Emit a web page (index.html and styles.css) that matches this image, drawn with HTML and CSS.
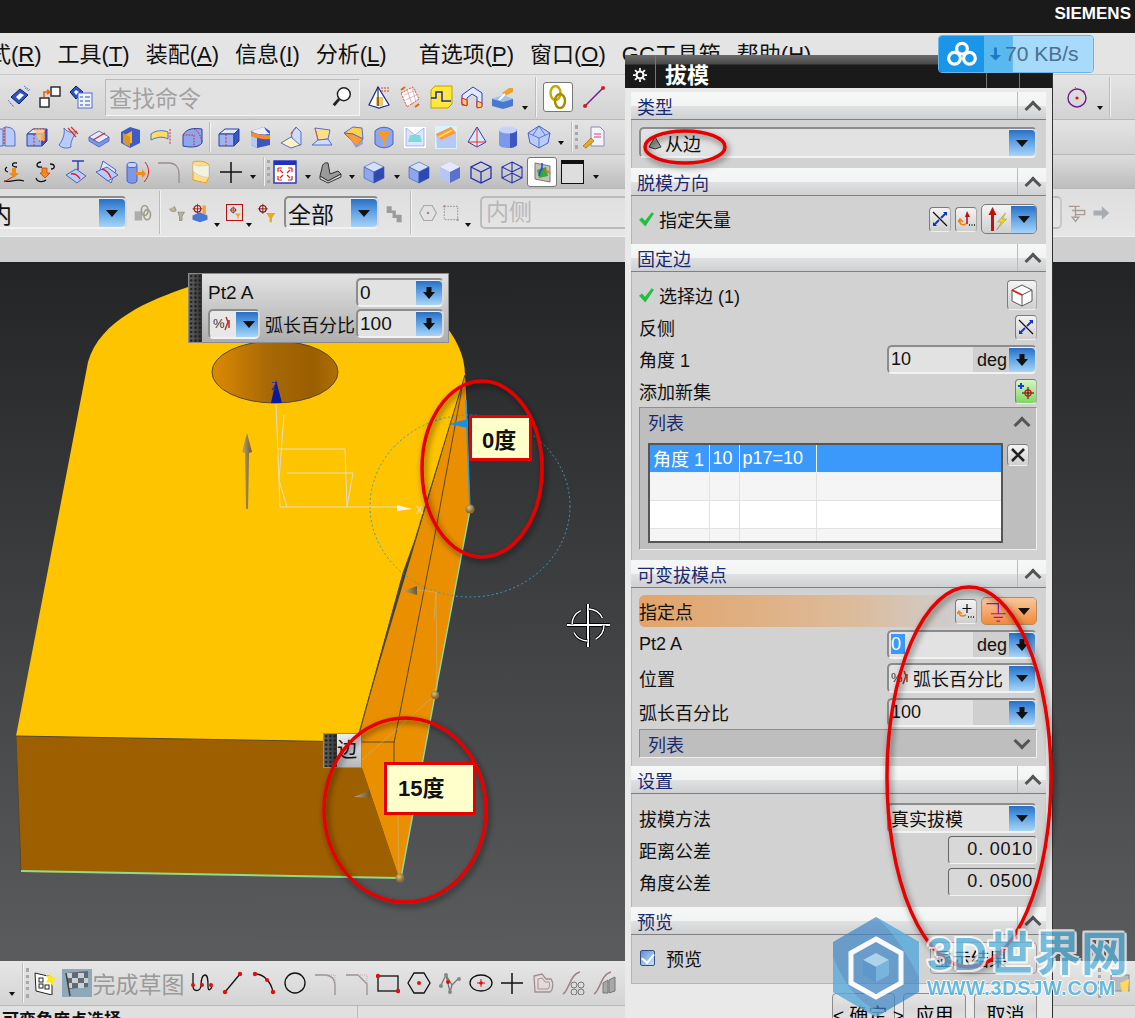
FILE: index.html
```html
<!DOCTYPE html>
<html lang="zh-CN">
<head>
  <meta charset="UTF-8">
  <title>NX 拔模</title>
  <link rel="stylesheet" href="styles.css">
</head>
<body>
  <!-- shared toolbar icons -->
  <svg class="defs" aria-hidden="true">
    <symbol id="cube" viewBox="0 0 24 24"><path d="M12 2 22 7 12 12 2 7Z" fill="#d5e0ff" stroke="#3a55b0" stroke-width=".6"/><path d="M2 7 12 12V23L2 18Z" fill="#8ea6ee" stroke="#3a55b0" stroke-width=".6"/><path d="M22 7 12 12V23L22 18Z" fill="#2c49b2" stroke="#3a55b0" stroke-width=".6"/></symbol>
    <symbol id="cube-soft" viewBox="0 0 24 24"><path d="M12 2 22 7 12 12 2 7Z" fill="#e3e9ff"/><path d="M2 7 12 12V23L2 18Z" fill="#b6c6f4"/><path d="M22 7 12 12V23L22 18Z" fill="#5a72cc"/></symbol>
    <symbol id="wire" viewBox="0 0 24 24"><path d="M12 2 22 7V18L12 23 2 18V7ZM2 7 12 12 22 7M12 12V23" fill="none" stroke="#2330b0" stroke-width="1.3"/></symbol>
    <symbol id="wire2" viewBox="0 0 24 24"><path d="M12 2 22 7V18L12 23 2 18V7ZM2 7 12 12 22 7M12 12V23M2 18 12 13 22 18M12 2V13" fill="none" stroke="#2330b0" stroke-width="1.1"/></symbol>
    <symbol id="box-cut" viewBox="0 0 24 24"><path d="M2 9 8 4H22L17 9Z" fill="#dfe7ff" stroke="#2840a8"/><path d="M2 9H17V21H2Z" fill="#9db2f0" stroke="#2840a8"/><path d="M17 9 22 4V16L17 21Z" fill="#3c58c0" stroke="#2840a8"/><path d="M9 9V21" stroke="#e02020" stroke-dasharray="2 1.4"/></symbol>
    <symbol id="box-red" viewBox="0 0 24 24"><use href="#box-cut"/><path d="M9 4H20V16H14" fill="#ffc86a" fill-opacity=".8" stroke="#e02020" stroke-dasharray="1.6 1.2"/></symbol>
    <symbol id="sheet" viewBox="0 0 24 24"><path d="M8 3C12 8 16 8 21 6 17 12 14 18 15 22 10 24 6 23 3 20 7 15 9 9 8 3Z" fill="#b9cbf8" stroke="#5570c8"/><path d="M12 3 20 12M15 2 22 9" stroke="#e03020" stroke-width="1.2"/></symbol>
    <symbol id="slab" viewBox="0 0 24 24"><path d="M2 12 12 6 22 12 12 18Z" fill="#e6ecff" stroke="#5a72cc"/><path d="M2 12V16L12 22 22 16V12L12 18Z" fill="#7e95e4" stroke="#5a72cc"/><path d="M6 15 18 8" stroke="#e02020" stroke-width="1.3"/></symbol>
    <symbol id="box-orange" viewBox="0 0 24 24"><path d="M3 7 12 2 22 5V18L12 23 3 18Z" fill="#3f5cc4"/><path d="M7 10 14 6V18L7 20Z" fill="#ffb020"/><path d="M5 8V18L12 22V12Z" fill="#d9962a"/></symbol>
    <symbol id="band" viewBox="0 0 24 24"><path d="M2 9C7 5 14 5 19 7V14C14 11 8 12 2 15Z" fill="#ffdd66" stroke="#5570c8"/><path d="M21 4V20" stroke="#e02020" stroke-dasharray="2 1.2"/></symbol>
    <symbol id="round-box" viewBox="0 0 24 24"><path d="M3 10C7 3 14 3 22 4V18C19 22 12 23 3 21Z" fill="#8ea6ee" stroke="#2840a8"/><path d="M14 4C18 6 21 10 22 18" fill="none" stroke="#e02020" stroke-dasharray="1.6 1.2"/><path d="M3 10H14V21" fill="none" stroke="#e02020" stroke-dasharray="1.6 1.2"/></symbol>
    <symbol id="edge-blend" viewBox="0 0 24 24"><path d="M3 6 16 2 22 6V20L9 23 3 20Z" fill="#3c58c0"/><path d="M3 6 16 2C18 6 20 8 22 9 14 10 7 9 3 6Z" fill="#e8eefc"/><path d="M3 7C9 9 16 11 22 10V14C15 15 8 13 3 11Z" fill="#ff8a20"/><path d="M3 11V20L9 23V13Z" fill="#b8c8f6"/></symbol>
    <symbol id="fold" viewBox="0 0 24 24"><path d="M17 2 22 7V20L14 18 12 8Z" fill="#cfdcff" stroke="#5570c8"/><path d="M2 18 12 12 21 20 12 23Z" fill="#fff2c0" stroke="#5570c8"/><path d="M12 13C13 8 14 5 17 3" stroke="#e06020" fill="none"/></symbol>
    <symbol id="fold2" viewBox="0 0 24 24"><path d="M5 3 20 5 18 14 8 15Z" fill="#ffe088" stroke="#5570c8"/><path d="M2 20 8 15 18 14 22 20Z" fill="#cfdcff" stroke="#5570c8"/><path d="M8 15 5 3" stroke="#e06020"/></symbol>
    <symbol id="fan" viewBox="0 0 24 24"><path d="M3 8 12 2 21 3 22 14 12 9Z" fill="#ffd050" stroke="#5570c8"/><path d="M3 8 12 9 22 14 16 21C11 16 7 12 3 8Z" fill="#ff9a30" stroke="#5570c8"/><path d="M7 11 16 21 22 14 22 19 15 23Z" fill="#8ea6ee"/></symbol>
    <symbol id="funnel" viewBox="0 0 24 24"><path d="M3 6C8 1 16 1 21 6V19C16 24 8 24 3 19Z" fill="#8ea6ee" stroke="#4a63c0"/><path d="M5 6H19L13 15V20H11V15Z" fill="#ff9a18"/></symbol>
    <symbol id="neck" viewBox="0 0 24 24"><path d="M1 2H23V23H1Z" fill="#fff"/><path d="M3 3 12 10 21 3V21H3Z" fill="#dce6ff" stroke="#7a90dc" stroke-width=".6"/><path d="M7 10H17L19 17H5Z" fill="#7adcd4"/></symbol>
    <symbol id="wedge" viewBox="0 0 24 24"><path d="M1 1H23V24H1Z" fill="#d9f0ff"/><path d="M2 9 17 2 22 8V23H3Z" fill="#b8c8f6"/><path d="M2 9 17 2 22 8 7 15Z" fill="#ff9a30"/><path d="M5 12 18 5" stroke="#ffe070" stroke-width="1.6"/></symbol>
    <symbol id="pyramid" viewBox="0 0 24 24"><path d="M12 2 3 17 12 22 21 17Z" fill="#dfe7ff" stroke="#2840c0"/><path d="M12 2V22M3 17H21" stroke="#e03020"/></symbol>
    <symbol id="cyl" viewBox="0 0 24 24"><path d="M3 5V20C5 24 19 24 21 20V5Z" fill="#7d98ea"/><path d="M14 4H21V20C20 22 16 23 14 23Z" fill="#3c58c0"/><ellipse cx="12" cy="5" rx="9" ry="3.4" fill="#c5d4ff"/></symbol>
    <symbol id="gem" viewBox="0 0 24 24"><path d="M12 1 23 8 21 18 12 23 3 18 1 8Z" fill="#b9cbf8" stroke="#4a63c0"/><path d="M1 8 12 13 23 8M12 13V23M12 1 6 10M12 1 18 10" stroke="#4a63c0" fill="none" stroke-width=".8"/></symbol>
    <symbol id="wrench" viewBox="0 0 24 24"><path d="M10 2H19L23 6V21H10Z" fill="#f2f2ff" stroke="#8a8ab0"/><path d="M13 9H20M13 12H20" stroke="#e04060"/><path d="M2 21 10 13 13 16 5 23Z" fill="#e8a820" stroke="#906000" stroke-width=".6"/></symbol>
    <symbol id="curve-drop" viewBox="0 0 24 24"><path d="M15 3C9 2 9 7 15 7M5 7C2 9 3 11 6 12M2 21C8 23 14 18 22 21" fill="none" stroke="#111" stroke-width="1.3"/><path d="M2 22 14 15" stroke="#d82020"/><path d="M10 8H14V13H17L12 18 7 13H10Z" fill="#f08c18"/></symbol>
    <symbol id="curve-drop2" viewBox="0 0 24 24"><path d="M8 2C2 3 3 8 9 7M17 4C23 4 22 9 18 9M3 18C5 24 12 21 13 20" fill="none" stroke="#111" stroke-width="1.3"/><path d="M9 8H14V13H17L12 18 7 13H9Z" fill="#f08c18" stroke="#c02010" stroke-width=".6"/></symbol>
    <symbol id="plate" viewBox="0 0 24 24"><path d="M2 15 12 9 22 16 13 23Z" fill="#b9cbf8" stroke="#4a63c0"/><path d="M8 1H20M14 1V10" stroke="#2840c0" stroke-width="1.4"/><path d="M7 14C10 13 14 15 16 19" stroke="#e02020" stroke-width="1.4" fill="none"/></symbol>
    <symbol id="plate2" viewBox="0 0 24 24"><path d="M8 1 21 10 16 23 4 14Z" fill="#dfe7ff" stroke="#4a63c0"/><path d="M1 12 12 7 23 15 13 21Z" fill="#b9cbf8" stroke="#4a63c0"/><path d="M7 9C11 10 14 13 16 18" stroke="#e02020" stroke-width="1.4" fill="none"/></symbol>
    <symbol id="cyl-arrow" viewBox="0 0 24 24"><path d="M1 6V21C3 24 10 24 11 21V6Z" fill="#7d98ea" stroke="#4a63c0"/><ellipse cx="6" cy="5" rx="5" ry="2.6" fill="#c5d4ff" stroke="#4a63c0"/><path d="M10 12H16V9L20 14 16 18V15H10Z" fill="#f08c18"/><path d="M19 2C24 8 24 16 18 22" stroke="#e02020" fill="none"/></symbol>
    <symbol id="corner" viewBox="0 0 24 24"><path d="M1 3H12C18 3 22 7 22 14V23" fill="none" stroke="#9a8c8c" stroke-width="1.3"/></symbol>
    <symbol id="shell" viewBox="0 0 24 24"><path d="M5 2C12 0 19 2 21 5V17L18 23 5 20Z" fill="#ffe088" stroke="#e8a020"/><path d="M5 2C5 6 12 7 21 5V17C16 18 9 15 5 11Z" fill="#f2f2e0" stroke="#c0c0d0" stroke-width=".6"/></symbol>
    <symbol id="plus" viewBox="0 0 24 24"><path d="M12 2V23M1 12H23" stroke="#111" stroke-width="1.5"/></symbol>
    <symbol id="fit" viewBox="0 0 24 24"><rect x="1" y="1" width="22" height="22" fill="#fff" stroke="#2030c0" stroke-width="1.4"/><rect x="1" y="1" width="22" height="4" fill="#2030c0"/><path d="M5 8 9 8M5 8V12M19 8H15M19 8V12M5 20H9M5 20V16M19 20H15M19 20V16M7 10 10 13M17 10 14 13M7 18 10 15M17 18 14 15" stroke="#e02020" stroke-width="1.2"/></symbol>
    <symbol id="clip" viewBox="0 0 24 24"><path d="M2 16 10 21 23 14 20 11 12 14 10 3C6 2 4 5 4 8Z" fill="#9a9a9a" stroke="#333"/><path d="M2 16V19L10 23 23 17V14L10 21Z" fill="#d8d8d8" stroke="#333"/></symbol>
    <symbol id="pose" viewBox="0 0 24 24"><path d="M5 3 20 6V22L5 19Z" fill="#c8c0b8" stroke="#777"/><path d="M7 10 16 7 18 16 9 18Z" fill="#38a838"/><path d="M12 3V10M9 16 12 7" stroke="#2050e0" stroke-width="1.6"/><path d="M15 10 20 13" stroke="#e07020" stroke-width="2"/></symbol>
    <symbol id="arrow-down" viewBox="0 0 14 14"><path d="M4.5 1H9.500V6H13L7 13 1 6H4.500Z" fill="#111"/></symbol>
    <symbol id="flip" viewBox="0 0 18 18"><path d="M2 2 16 16" stroke="#111" stroke-width="1.2"/><path d="M10 8 15 3M3 15 8 10" stroke="#1030d0" stroke-width="1.8"/><path d="M12 2H16V6ZM2 12V16H6Z" fill="#1030d0"/></symbol>
  </svg>

  <header class="title-strip"><span class="brand">SIEMENS</span></header>

  <nav class="menu">
    <span>式(<u>R</u>)</span>
    <span>工具(<u>T</u>)</span>
    <span>装配(<u>A</u>)</span>
    <span>信息(<u>I</u>)</span>
    <span>分析(<u>L</u>)</span>
    <span class="menu-gap">首选项(<u>P</u>)</span>
    <span>窗口(<u>O</u>)</span>
    <span>GC工具箱</span>
    <span>帮助(<u>H</u>)</span>
  </nav>

  <div class="toolbar tb-one">
    <span class="slot"><svg class="ic" viewBox="0 0 24 24"><path d="M4 12 13 4 21 10 12 19Z" fill="#2a55c8" stroke="#10205a"/><path d="M9 12 13 8 17 10 12 15Z" fill="#fff"/><path d="M3 18 7 22M18 3 22 6M1 15 6 21M17 1 23 5" stroke="#5080e0" stroke-dasharray="2 1"/></svg></span>
    <span class="slot"><svg class="ic" viewBox="0 0 24 24"><rect x="2" y="13" width="9" height="9" fill="#fff" stroke="#222" stroke-width="1.4"/><rect x="13" y="2" width="9" height="9" fill="#fff" stroke="#222" stroke-width="1.4"/><path d="M6 12V7H11M9 5 12 7 9 9" fill="none" stroke="#f06010" stroke-width="1.6"/></svg></span>
    <span class="slot"><svg class="ic" viewBox="0 0 24 24"><path d="M1 7 7 1 14 7 7 14Z" fill="#2a55c8" stroke="#10205a"/><path d="M5 7 7 5 10 7 7 10Z" fill="#fff"/><rect x="9" y="8" width="14" height="15" fill="#eef2ff" stroke="#5570c8"/><path d="M11 12H14M16 12H21M11 16H14M16 16H21M11 20H14M16 20H21" stroke="#3050b0"/></svg></span>
    <div class="search"><span>查找命令</span><svg class="search-ic" viewBox="0 0 24 24"><circle cx="14" cy="9" r="7" fill="#fff" stroke="#222" stroke-width="1.6"/><path d="M9 14 3 21" stroke="#222" stroke-width="3"/></svg></div>
    <span class="slot"><svg class="ic" viewBox="0 0 24 24"><path d="M11 2 2 20 12 23 22 20Z" fill="#fff" stroke="#1a2a9a" stroke-width="1.2"/><path d="M9 12H16V21H9Z" fill="#f4c862"/><path d="M11 2V21" stroke="#111"/><path d="M14 3H22M14 6H22" stroke="#e04020" stroke-dasharray="2 1"/></svg></span>
    <span class="slot"><svg class="ic" viewBox="0 0 24 24"><path d="M3 8 15 2 21 14 9 22Z" fill="#fff" stroke="#e05030" stroke-dasharray="2 1"/><path d="M6 10 18 5M8 15 20 9M9 4 14 20M14 3 18 17" stroke="#d0a0a0" stroke-width=".7"/><path d="M3 5 7 2M17 22 21 19" stroke="#f06010" stroke-width="2"/></svg></span>
    <span class="slot"><svg class="ic" viewBox="0 0 24 24"><path d="M2 5 6 1H23V19L19 23H2Z" fill="#ffe83a" stroke="#c0a000"/><path d="M2 13H7V7H13V16H22" fill="none" stroke="#1a2ab0" stroke-width="1.5"/></svg></span>
    <span class="slot"><svg class="ic" viewBox="0 0 24 24"><path d="M2 10 13 2 22 8V20L17 22V12L12 9 7 13V20L2 20Z" fill="#e3e9ff" stroke="#3040b0"/><path d="M2 13 7 15V21L2 19ZM17 16 22 18V22L17 23Z" fill="#ffd070" stroke="#e02020"/></svg></span>
    <span class="slot"><svg class="ic" viewBox="0 0 24 24"><path d="M1 14 12 11 22 14V21L12 24 1 21Z" fill="#4878d0"/><path d="M1 14 12 10 22 14 12 17Z" fill="#9dc0f0"/><path d="M11 8 18 3 22 3V7L14 11Z" fill="#f0a030"/><path d="M8 15 14 9" stroke="#fff" stroke-width="2"/></svg></span>
    <i class="drop"></i>
    <i class="sep"></i>
    <span class="toggle toggle-chain"><svg class="ic" viewBox="0 0 24 24"><ellipse cx="9.500" cy="8" rx="5" ry="7" fill="none" stroke="#c8a800" stroke-width="2.400"/><ellipse cx="14" cy="16" rx="5" ry="7" fill="none" stroke="#a88a00" stroke-width="2.400"/></svg></span>
    <span class="slot slot-line"><svg class="ic" viewBox="0 0 24 24"><path d="M3 21 21 3" stroke="#701890" stroke-width="1.400"/><circle cx="3" cy="21" r="2" fill="#e01818"/><circle cx="21" cy="3" r="2" fill="#e01818"/></svg></span>
    <span class="tb-fill"></span>
    <span class="slot"><svg class="ic" viewBox="0 0 24 24"><circle cx="4" cy="12" r="9" fill="none" stroke="#701890" stroke-width="1.400"/></svg></span>
    <span class="slot"><svg class="ic" viewBox="0 0 24 24"><circle cx="12" cy="13" r="9" fill="none" stroke="#701890" stroke-width="1.400"/><circle cx="12" cy="13" r="1.600" fill="#e01818"/><path d="M10 2 12 5M18 5 21 8" stroke="#e01818" stroke-dasharray="1 1"/></svg></span>
    <i class="drop"></i>
    <i class="sep sep-end"></i>
  </div>

  <div class="toolbar tb-two">
    <span class="slot"><svg class="ic" viewBox="0 0 24 24"><path d="M1 4H9V21H1ZM11 2C17 2 21 4 21 10V21H11Z" fill="#b9cbf8" stroke="#5570c8"/><path d="M10 2V21" stroke="#e02020" stroke-dasharray="2 1"/></svg></span>
    <span class="slot"><svg class="ic"><use href="#box-red"/></svg></span>
    <span class="slot"><svg class="ic"><use href="#sheet"/></svg></span>
    <span class="slot"><svg class="ic"><use href="#slab"/></svg></span>
    <span class="slot"><svg class="ic"><use href="#box-orange"/></svg></span>
    <span class="slot"><svg class="ic"><use href="#band"/></svg></span>
    <span class="slot"><svg class="ic"><use href="#round-box"/></svg></span>
    <i class="sep sep-two"></i>
    <span class="slot"><svg class="ic"><use href="#box-cut"/></svg></span>
    <span class="slot"><svg class="ic"><use href="#edge-blend"/></svg></span>
    <span class="slot"><svg class="ic"><use href="#fold"/></svg></span>
    <span class="slot"><svg class="ic"><use href="#fold2"/></svg></span>
    <span class="slot"><svg class="ic"><use href="#fan"/></svg></span>
    <span class="slot"><svg class="ic"><use href="#funnel"/></svg></span>
    <span class="slot"><svg class="ic"><use href="#neck"/></svg></span>
    <span class="slot"><svg class="ic"><use href="#wedge"/></svg></span>
    <span class="slot"><svg class="ic"><use href="#pyramid"/></svg></span>
    <span class="slot"><svg class="ic"><use href="#cyl"/></svg></span>
    <span class="slot"><svg class="ic"><use href="#gem"/></svg></span>
    <i class="drop"></i>
    <i class="sep"></i>
    <i class="grip"></i>
    <span class="slot"><svg class="ic"><use href="#wrench"/></svg></span>
  </div>

  <div class="toolbar tb-three">
    <span class="slot"><svg class="ic"><use href="#curve-drop"/></svg></span>
    <span class="slot"><svg class="ic"><use href="#curve-drop2"/></svg></span>
    <span class="slot"><svg class="ic"><use href="#plate"/></svg></span>
    <span class="slot"><svg class="ic"><use href="#plate2"/></svg></span>
    <span class="slot"><svg class="ic"><use href="#cyl-arrow"/></svg></span>
    <span class="slot"><svg class="ic"><use href="#corner"/></svg></span>
    <span class="slot"><svg class="ic"><use href="#shell"/></svg></span>
    <span class="slot"><svg class="ic"><use href="#plus"/></svg></span>
    <i class="drop"></i>
    <i class="sep"></i>
    <i class="grip"></i>
    <span class="slot"><svg class="ic"><use href="#fit"/></svg></span>
    <i class="drop"></i>
    <span class="slot"><svg class="ic"><use href="#clip"/></svg></span>
    <i class="drop"></i>
    <span class="slot"><svg class="ic"><use href="#cube"/></svg></span>
    <i class="drop"></i>
    <span class="slot"><svg class="ic"><use href="#cube"/></svg></span>
    <span class="slot"><svg class="ic"><use href="#cube-soft"/></svg></span>
    <span class="slot"><svg class="ic"><use href="#wire"/></svg></span>
    <span class="slot"><svg class="ic"><use href="#wire2"/></svg></span>
    <span class="toggle toggle-pose"><svg class="ic"><use href="#pose"/></svg></span>
    <span class="swatch"></span>
    <i class="drop"></i>
  </div>

  <div class="toolbar tb-select">
    <div class="combo combo-filter"><span class="combo-val">内</span><span class="arrow-btn tri"></span></div>
    <svg class="ic-s dim ic-chain" viewBox="0 0 24 24"><rect x="2" y="10" width="9" height="11" fill="#a0a0a0"/><ellipse cx="14" cy="9" rx="4" ry="6" fill="none" stroke="#8f8f70" stroke-width="2"/><ellipse cx="17" cy="14" rx="4" ry="6" fill="none" stroke="#8f8f70" stroke-width="2"/></svg>
    <i class="sep sep-sel"></i>
    <svg class="ic-s dim" viewBox="0 0 24 24"><path d="M3 7C4 11 9 11 11 9L9 4M13 11H21L18 16V21H15V16Z" fill="#b0a880" stroke="#777"/></svg>
    <svg class="ic-s" viewBox="0 0 24 24"><circle cx="9" cy="7" r="4" fill="none" stroke="#a01010" stroke-width="1.400"/><path d="M9 1V13M3 7H15" stroke="#a01010"/><path d="M3 15 12 11 21 15V20L12 23 3 20Z" fill="#4878d0"/><path d="M15 3H19V13H15Z" fill="#f0a030"/></svg>
    <i class="drop"></i>
    <span class="boxed"><svg class="ic-s" viewBox="0 0 24 24"><circle cx="9" cy="7" r="4" fill="none" stroke="#801010" stroke-width="1.400"/><path d="M9 1V13M3 7H15" stroke="#801010"/><path d="M12 13H22L18 18V22H16V18Z" fill="#e8a820"/></svg></span>
    <i class="drop"></i>
    <svg class="ic-s" viewBox="0 0 24 24"><circle cx="7" cy="7" r="4" fill="none" stroke="#801010" stroke-width="1.400"/><path d="M7 1V13M1 7H13" stroke="#801010"/><path d="M11 12H22L18 18V23H15V18Z" fill="#e8a820"/></svg>
    <div class="combo combo-all"><span class="combo-val">全部</span><span class="arrow-btn tri"></span></div>
    <svg class="ic-s dim" viewBox="0 0 24 24"><path d="M2 4H8V9H13V14H20V23H14V18H9V12H2Z" fill="#8a8a8a"/></svg>
    <i class="sep sep-sel"></i>
    <svg class="ic-s dim" viewBox="0 0 24 24"><path d="M7 3H17L22 12 17 21H7L2 12Z" fill="none" stroke="#9a9a9a" stroke-width="1.400"/><circle cx="12" cy="12" r="1.600" fill="#a07070"/></svg>
    <svg class="ic-s dim" viewBox="0 0 24 24"><rect x="4" y="4" width="16" height="16" fill="none" stroke="#909090" stroke-width="1.400" stroke-dasharray="2 1.500"/><circle cx="4" cy="4" r="1.500" fill="#b08080"/><circle cx="20" cy="20" r="1.500" fill="#b08080"/></svg>
    <i class="drop"></i>
    <div class="inner-field">内侧</div>
    <svg class="ic-s dim ic-far" viewBox="0 0 24 24"><path d="M1 4H14M9 4V18M5 9H20V14H9M9 22 5 17H13Z" fill="none" stroke="#9a8a80" stroke-width="1.600"/></svg>
    <svg class="ic-s dim" viewBox="0 0 24 24"><path d="M3 9H13V4L22 12 13 20V15H3Z" fill="#9aa0a8"/></svg>
  </div>
  <div class="blank-strip"></div>

  <main class="viewport">
    <svg class="model" viewBox="0 262 1135 699" aria-hidden="true">
      <defs>
        <linearGradient id="hole-fill"><stop offset="0" stop-color="#dc8a02"/><stop offset=".45" stop-color="#a86806"/><stop offset=".8" stop-color="#9a5e00"/><stop offset="1" stop-color="#b07008"/></linearGradient>
        <linearGradient id="cone-fill" x1="0" x2="1"><stop offset="0" stop-color="#c0a870"/><stop offset="1" stop-color="#6a5830"/></linearGradient>
        <radialGradient id="ball-fill" cx=".4" cy=".35"><stop offset="0" stop-color="#d8c08a"/><stop offset="1" stop-color="#8a6c34"/></radialGradient>
      </defs>
      <path d="M399 878 362 768 356 742 465 375 466 392 470 510 435 695 401 878Z" fill="#ea8f00"/>
      <path d="M16 736 356 742 362 768 399 878 21 872Z" fill="#9e5f00"/>
      <path d="M16 736 88 362C100 320 150 300 188 287L440 320C455 335 465 355 465 375L415 540 403 573 356 742Z" fill="#ffc400"/>
      <path d="M16 736 357 742 403 573 415 540 465 375M16 736 21 872M462 388 433 545 394 743V790M357 742H394" fill="none" stroke="#54483a" stroke-width="1"/>
      <path d="M21 871 399 878" stroke="#90dc88" stroke-width="2"/>
      <path d="M401 878 435 695 470 510" stroke="#8fd8a0" stroke-width="1.400" fill="none"/>
      <path d="M466 400 470 510" stroke="#2a9ae0" stroke-width="1.500"/>
      <ellipse cx="275" cy="372" rx="63" ry="31" fill="url(#hole-fill)" stroke="#54483a"/>
      <ellipse cx="470" cy="506" rx="100" ry="91" fill="none" stroke="#3a9ac8" stroke-dasharray="2 2.500" stroke-width="1"/>
      <path d="M276 404 280 507H397M278 449H345L347 507M284 415 279 480 287 507M287 473H353L347 507" fill="none" stroke="#e2dcc8" stroke-width="1"/>
      <path d="M276 380 282 403H271Z" fill="#0a1a9a"/>
      <path d="M397 505 412 509 397 511Z" fill="#f0f0f0"/>
      <text class="axis-z" x="271" y="390">Z</text>
      <text class="axis-x" x="416" y="514">X</text>
      <path d="M247 433 252 452 249 453 248 509 246 509 245 453 242 452Z" fill="url(#cone-fill)"/>
      <path d="M449 424 468 419V428Z" fill="#1492e6"/>
      <path d="M403 591 417 586V595Z" fill="url(#cone-fill)"/>
      <path d="M354 797 370 790V798Z" fill="url(#cone-fill)"/>
      <path d="M417 590 436 592 437 690M436 592 434 620M435 695 362 760M399 878 398 814" fill="none" stroke="#c4b890" stroke-width=".8" opacity=".7"/>
      <circle cx="470" cy="509" r="4.500" fill="url(#ball-fill)"/>
      <circle cx="435" cy="695" r="4" fill="url(#ball-fill)"/>
      <circle cx="400" cy="878" r="4.500" fill="url(#ball-fill)"/>
      <path d="M588 604V647M567 625H610" stroke="#000" stroke-width="4"/>
      <path d="M588 604V647M567 625H610" stroke="#fff" stroke-width="2"/>
      <circle cx="588" cy="625" r="16" fill="none" stroke="#000" stroke-width="3" stroke-dasharray="17 8.200"/>
      <circle cx="588" cy="625" r="16" fill="none" stroke="#fff" stroke-width="1.400" stroke-dasharray="17 8.200"/>
    </svg>

    <div class="float-panel">
      <i class="float-grip"></i>
      <div class="float-body">
        <div class="float-row">
          <span class="float-label">Pt2 A</span>
          <div class="spin spin-float"><span class="spin-val">0</span><span class="arrow-btn"><svg class="arrow-ic"><use href="#arrow-down"/></svg></span></div>
        </div>
        <div class="float-row">
          <div class="combo combo-mini"><svg class="mini-ic" viewBox="0 0 20 20"><text x="0" y="14" class="pct">%</text><path d="M13 3 15 8 12 16M16 6V14" stroke="#c83020" stroke-width="1.500" fill="none"/></svg><span class="arrow-btn tri"></span></div>
          <span class="float-text">弧长百分比</span>
          <div class="spin spin-float"><span class="spin-val">100</span><span class="arrow-btn"><svg class="arrow-ic"><use href="#arrow-down"/></svg></span></div>
        </div>
      </div>
    </div>

    <div class="edge-tag"><i class="float-grip"></i><span>边</span></div>
    <div class="callout callout-zero">0度</div>
    <div class="callout callout-fifteen">15度</div>
  </main>

  <div class="toolbar tb-bottom">
    <i class="drop drop-first"></i>
    <i class="sep"></i>
    <i class="grip"></i>
    <span class="slot slot-tight"><svg class="ic" viewBox="0 0 24 24"><path d="M2 2 19 6V24L3 20Z" fill="#fff" stroke="#222"/><rect x="6" y="7" width="4" height="4" fill="none" stroke="#222"/><rect x="6" y="13" width="4" height="4" fill="none" stroke="#222"/><rect x="12" y="14" width="4" height="4" fill="none" stroke="#222"/><path d="M17 1 19 6 24 7 20 10 20 15 17 11 13 12 15 8 13 4 17 5Z" fill="#ffe820"/></svg></span>
    <svg class="flag" viewBox="0 0 30 28"><rect width="30" height="28" fill="#8ea8b8"/><path d="M4 4 26 2V18L7 20Z" fill="#606870"/><path d="M4 4H10V9H16V4H22V9H26V14H22V9H16V14H10V9H5ZM7 14H10V19H7ZM16 14H22V19H16Z" fill="#c8d0d8"/><path d="M4 4 8 27" stroke="#444" stroke-width="1.500"/></svg>
    <span class="finish">完成草图</span>
    <span class="slot"><svg class="ic" viewBox="0 0 24 24"><path d="M3 2V15C3 21 10 21 11 15 11 10 12 4 15 4 18 4 18 10 18 15 18 21 21 19 22 15" fill="none" stroke="#111" stroke-width="1.300"/><circle cx="3" cy="14" r="2" fill="#e01010"/><circle cx="12" cy="14" r="2" fill="#e01010"/><circle cx="21" cy="14" r="2" fill="#e01010"/></svg></span>
    <span class="slot"><svg class="ic" viewBox="0 0 24 24"><path d="M4 21 19 3" stroke="#111" stroke-width="1.300"/><circle cx="4" cy="21" r="2.200" fill="#e01010"/><circle cx="19" cy="3" r="2.200" fill="#e01010"/></svg></span>
    <span class="slot"><svg class="ic" viewBox="0 0 24 24"><path d="M3 3C12 3 19 11 21 21" fill="none" stroke="#111" stroke-width="1.300"/><circle cx="3" cy="3" r="2.200" fill="#e01010"/><circle cx="15" cy="9" r="2" fill="#e01010"/><circle cx="21" cy="21" r="2.200" fill="#e01010"/></svg></span>
    <span class="slot"><svg class="ic" viewBox="0 0 24 24"><circle cx="12" cy="12" r="10" fill="none" stroke="#111" stroke-width="1.300"/></svg></span>
    <span class="slot"><svg class="ic" viewBox="0 0 24 24"><path d="M1 4H11C17 4 21 8 21 14V24" fill="none" stroke="#a09090" stroke-width="1.300"/><path d="M11 4H21V14" fill="none" stroke="#c0b0b0" stroke-dasharray="1 1"/></svg></span>
    <span class="slot"><svg class="ic" viewBox="0 0 24 24"><path d="M1 4H13L22 13V24" fill="none" stroke="#a09090" stroke-width="1.300"/><path d="M13 4H22V13" fill="none" stroke="#c0b0b0" stroke-dasharray="1 1"/></svg></span>
    <span class="slot"><svg class="ic" viewBox="0 0 24 24"><rect x="2" y="5" width="20" height="15" fill="none" stroke="#111" stroke-width="1.300"/><circle cx="2" cy="5" r="2.200" fill="#e01010"/><circle cx="22" cy="20" r="2.200" fill="#e01010"/></svg></span>
    <span class="slot"><svg class="ic" viewBox="0 0 24 24"><path d="M7 2H17L23 12 17 22H7L1 12Z" fill="none" stroke="#111" stroke-width="1.300"/><circle cx="12" cy="12" r="2" fill="#e01010"/></svg></span>
    <span class="slot"><svg class="ic" viewBox="0 0 24 24"><path d="M2 16 8 4 14 14 20 8M8 4 12 21 14 14" fill="none" stroke="#777" stroke-width="1.300"/><circle cx="8" cy="4" r="2" fill="#888"/><circle cx="3" cy="15" r="2" fill="#888"/><circle cx="12" cy="21" r="2" fill="#888"/><circle cx="21" cy="8" r="2" fill="#888"/><circle cx="10" cy="11" r="2" fill="#e01010"/></svg></span>
    <span class="slot"><svg class="ic" viewBox="0 0 24 24"><ellipse cx="12" cy="12" rx="11" ry="8" fill="none" stroke="#111" stroke-width="1.300"/><path d="M12 8V16M8 12H16" stroke="#e01010"/><circle cx="12" cy="12" r="1.800" fill="#e01010"/></svg></span>
    <span class="slot"><svg class="ic"><use href="#plus"/></svg></span>
    <span class="slot"><svg class="ic" viewBox="0 0 24 24"><path d="M3 5 11 3 15 8H20C23 12 22 19 19 21H4Z" fill="none" stroke="#a09090" stroke-width="1.300"/><path d="M7 8 11 7 14 11H18C19 13 19 16 17 18H7Z" fill="none" stroke="#b88"/></svg></span>
    <span class="slot"><svg class="ic" viewBox="0 0 24 24"><path d="M1 23C7 20 8 3 18 1" fill="none" stroke="#a08080" stroke-width="1.600"/><circle cx="12" cy="14" r="3" fill="none" stroke="#777"/><circle cx="19" cy="14" r="3" fill="none" stroke="#777"/><circle cx="12" cy="21" r="3" fill="none" stroke="#777"/><circle cx="19" cy="21" r="3" fill="none" stroke="#777"/></svg></span>
    <span class="slot"><svg class="ic" viewBox="0 0 24 24"><path d="M1 23C7 20 8 3 18 1" fill="none" stroke="#a08080" stroke-width="1.600"/><path d="M10 12 15 9V22L10 22ZM16 9 22 6V20L16 22Z" fill="#a8a8a8" stroke="#777"/></svg></span>
    <span class="tb-fill"></span>
    <i class="drop"></i>
    <i class="grip grip-far"></i>
    <span class="slot"><svg class="ic" viewBox="0 0 24 24"><rect x="3" y="4" width="18" height="16" fill="#b8b8c0" stroke="#888"/><path d="M21 8 20 21H14L12 12Z" fill="#ffd860"/></svg></span>
  </div>
  <footer class="status-bar"><span class="status-text">可变角度点选择</span></footer>

  <section class="dialog">
    <div class="dialog-title">
      <svg class="gear" viewBox="0 0 16 16"><circle cx="8" cy="8" r="4" fill="none" stroke="#fff" stroke-width="2.400"/><path d="M8 0V3M8 13V16M0 8H3M13 8H16M2.300 2.300 4.500 4.500M11.500 11.500 13.700 13.700M13.700 2.300 11.500 4.500M4.500 11.500 2.300 13.700" stroke="#fff" stroke-width="2"/></svg>
      <span class="dialog-name">拔模</span>
      <i class="title-cell"></i>
      <i class="title-cell"></i>
    </div>

    <div class="sec-head"><span>类型</span><i class="chev"></i></div>
    <div class="sec-body sec-type">
      <div class="combo combo-wide"><svg class="type-ic" viewBox="0 0 16 16"><path d="M8 2 2 12 8 14 14 12Z" fill="#999" stroke="#333"/></svg><span class="combo-val">从边</span><span class="arrow-btn tri"></span></div>
    </div>

    <div class="sec-head"><span>脱模方向</span><i class="chev"></i></div>
    <div class="sec-body sec-dir">
      <div class="row">
        <span class="row-label"><i class="tick"></i>指定矢量</span>
        <span class="row-tools">
          <button class="tool"><svg class="flip-ic"><use href="#flip"/></svg></button>
          <button class="tool"><svg class="flip-ic" viewBox="0 0 18 18"><path d="M10 1 13 7H8Z" fill="#c01010"/><path d="M10 6V14" stroke="#c01010" stroke-width="1.600"/><path d="M9 14C5 16 2 14 3 10M1 12 3 9 6 12" fill="none" stroke="#f08010" stroke-width="1.500"/><path d="M12 15H13M14.500 15H15.500M17 15H18" stroke="#111" stroke-width="1.500"/></svg></button>
          <span class="split">
            <svg class="split-ic" viewBox="0 0 24 24"><path d="M8 0 12 8H9.500V24H6.500V8H4Z" fill="#c01010"/><path d="M21 6 13 15H17L12 23 22 12H18Z" fill="#f4d820" stroke="#8a8a40" stroke-width=".5"/></svg>
            <span class="arrow-btn tri"></span>
          </span>
        </span>
      </div>
    </div>

    <div class="sec-head"><span>固定边</span><i class="chev"></i></div>
    <div class="sec-body sec-fixed">
      <div class="row">
        <span class="row-label"><i class="tick"></i>选择边 (1)</span>
        <button class="tool tool-big"><svg class="cube-ic" viewBox="0 0 24 24"><path d="M12 2 22 7V18L12 23 2 18V7Z" fill="#fff" stroke="#555"/><path d="M2 7 12 12 22 7M12 12V23" fill="none" stroke="#555"/><path d="M2 7 12 12" stroke="#e02010" stroke-width="1.600"/></svg></button>
      </div>
      <div class="row">
        <span class="row-label">反侧</span>
        <button class="tool"><svg class="flip-ic"><use href="#flip"/></svg></button>
      </div>
      <div class="row">
        <span class="row-label">角度 1</span>
        <div class="spin"><span class="spin-val">10</span><span class="spin-unit">deg</span><span class="arrow-btn"><svg class="arrow-ic"><use href="#arrow-down"/></svg></span></div>
      </div>
      <div class="row">
        <span class="row-label">添加新集</span>
        <button class="tool tool-green"><svg class="flip-ic" viewBox="0 0 18 18"><path d="M1 4H7M4 1V7" stroke="#1040e0" stroke-width="2"/><path d="M11 5V17M5 11H17" stroke="#111"/><circle cx="11" cy="11" r="3" fill="none" stroke="#e01010" stroke-width="1.400"/></svg></button>
      </div>
      <div class="sublist">
        <div class="sublist-head"><span>列表</span><i class="chev"></i></div>
        <div class="sublist-body">
          <table class="set-table">
            <tr class="picked"><td class="col-a">角度 1</td><td class="col-b">10</td><td class="col-c">p17=10</td><td></td></tr>
            <tr class="tinted"><td></td><td></td><td></td><td></td></tr>
            <tr><td></td><td></td><td></td><td></td></tr>
            <tr class="tinted stub"><td></td><td></td><td></td><td></td></tr>
          </table>
          <button class="tool tool-x"><svg class="flip-ic" viewBox="0 0 18 18"><path d="M3 3 15 15M15 3 3 15" stroke="#222" stroke-width="2.600"/></svg></button>
        </div>
      </div>
    </div>

    <div class="sec-head"><span>可变拔模点</span><i class="chev"></i></div>
    <div class="sec-body sec-points">
      <div class="row row-active">
        <span class="row-label">指定点</span>
        <span class="row-tools">
          <button class="tool"><svg class="flip-ic" viewBox="0 0 18 18"><path d="M10 2V11M5.500 6.500H14.500" stroke="#111" stroke-width="1.200"/><path d="M9 13C5 15 2 14 2 10M0 12 2 9 5 12" fill="none" stroke="#f08010" stroke-width="1.400"/><path d="M11 15H12M13.500 15H14.500M16 15H17" stroke="#111" stroke-width="1.500"/></svg></button>
          <span class="split split-orange">
            <svg class="split-ic" viewBox="0 0 24 24"><path d="M1 4H14V15M6 15H22M9 19H19M12 23H16" fill="none" stroke="#a010c0" stroke-width="1.300"/></svg>
            <span class="arrow-btn tri arrow-orange"></span>
          </span>
        </span>
      </div>
      <div class="row row-tall">
        <span class="row-label">Pt2 A</span>
        <div class="spin"><span class="spin-val"><mark class="sel">0</mark></span><span class="spin-unit">deg</span><span class="arrow-btn"><svg class="arrow-ic"><use href="#arrow-down"/></svg></span></div>
      </div>
      <div class="row row-tall">
        <span class="row-label">位置</span>
        <div class="combo combo-field"><svg class="mini-ic" viewBox="0 0 20 20"><text x="0" y="14" class="pct">%</text><path d="M13 3 15 8 12 16M16 6V14" stroke="#c83020" stroke-width="1.500" fill="none"/></svg><span class="combo-val">弧长百分比</span><span class="arrow-btn tri"></span></div>
      </div>
      <div class="row row-tall">
        <span class="row-label">弧长百分比</span>
        <div class="spin"><span class="spin-val">100</span><span class="spin-unit"></span><span class="arrow-btn"><svg class="arrow-ic"><use href="#arrow-down"/></svg></span></div>
      </div>
      <div class="sublist sublist-closed">
        <div class="sublist-head"><span>列表</span><i class="chev chev-down"></i></div>
      </div>
    </div>

    <div class="sec-head"><span>设置</span><i class="chev"></i></div>
    <div class="sec-body sec-settings">
      <div class="row">
        <span class="row-label">拔模方法</span>
        <div class="combo combo-field"><span class="combo-val">真实拔模</span><span class="arrow-btn tri"></span></div>
      </div>
      <div class="row">
        <span class="row-label">距离公差</span>
        <div class="num">0. 0010</div>
      </div>
      <div class="row">
        <span class="row-label">角度公差</span>
        <div class="num">0. 0500</div>
      </div>
    </div>

    <div class="sec-head"><span>预览</span><i class="chev"></i></div>
    <div class="sec-body sec-preview">
      <div class="row">
        <span class="row-label"><i class="checkbox"></i>预览</span>
        <button class="show-btn">显示结果</button>
      </div>
    </div>

    <div class="dialog-foot">
      <button class="foot-btn">&lt; 确定 &gt;</button>
      <button class="foot-btn">应用</button>
      <button class="foot-btn">取消</button>
    </div>
  </section>

  <svg class="marks" viewBox="0 0 1135 1018" aria-hidden="true">
    <defs>
      <filter id="mark-shadow" x="-20%" y="-20%" width="140%" height="140%"><feDropShadow dx="2" dy="3" stdDeviation="3" flood-color="#000" flood-opacity=".55"/></filter>
    </defs>
    <g fill="none" stroke="#e60000" stroke-width="3.500" filter="url(#mark-shadow)">
      <ellipse cx="482" cy="469" rx="60" ry="88"/>
      <ellipse cx="405" cy="810" rx="81" ry="92"/>
      <ellipse cx="969" cy="777" rx="82" ry="190"/>
      <ellipse cx="685" cy="147" rx="40" ry="16"/>
    </g>
  </svg>

  <div class="speed-badge">
    <span class="speed-logo"><svg viewBox="0 0 30 24" class="speed-ic"><circle cx="15" cy="7" r="5" fill="none" stroke="#fff" stroke-width="3"/><circle cx="8" cy="16" r="5.500" fill="none" stroke="#fff" stroke-width="3"/><circle cx="22" cy="16" r="5.500" fill="none" stroke="#fff" stroke-width="3"/></svg></span>
    <span class="speed-val"><svg viewBox="0 0 14 16" class="speed-arrow"><path d="M5.500 1H8.500V9H13L7 15 1 9H5.500Z" fill="#1f78c8"/></svg>70 KB/s</span>
  </div>

  <div class="watermark">
    <svg class="wm-logo" viewBox="0 0 86 100"><path d="M43 0 86 25V75L43 100 0 75V25Z" fill="#3f86c6" opacity=".8"/><path d="M43 0 86 25V60C70 30 60 15 43 0Z" fill="#5fb4e0" opacity=".8"/><path d="M0 40C20 90 50 100 60 90L43 100 0 75Z" fill="#6ab8e0" opacity=".7"/><path d="M43 22 68 36V66L43 80 18 66V36Z" fill="none" stroke="#fff" stroke-width="5"/><path d="M43 36 56 43 43 50 30 43Z" fill="#a8d4f0"/><path d="M30 43 43 50V65L30 58Z" fill="#4e90cc"/><path d="M56 43 43 50V65L56 58Z" fill="#6cb0de"/></svg>
    <div class="wm-text">
      <span class="wm-name">3D世界网</span>
      <span class="wm-url">WWW.3DSJW.COM</span>
    </div>
  </div>
</body>
</html>
```

FILE: styles.css
```css
* {
  box-sizing: border-box;
}

body {
  margin: 0;
  width: 1135px;
  height: 1018px;
  overflow: hidden;
  position: relative;
  display: flex;
  flex-direction: column;
  background-color: #e4e4e4;
  font-family: "Liberation Sans", "Noto Sans CJK SC", sans-serif;
  color: #111;
}

.defs {
  position: absolute;
  width: 0;
  height: 0;
}

button {
  font-family: inherit;
  padding: 0;
}

/* window chrome */
.title-strip {
  height: 34px;
  flex: none;
  background-color: #1a1a1a;
  border-bottom: 1px solid #e8e8e8;
  display: flex;
  justify-content: flex-end;
  align-items: center;
  padding: 0 4px 6px 0;
}

.brand {
  color: #fff;
  font-size: 17px;
  font-weight: bold;
}

.menu {
  height: 41px;
  flex: none;
  display: flex;
  align-items: center;
  gap: 16px;
  margin-left: -11px;
  padding-bottom: 4px;
  font-size: 22px;
  white-space: nowrap;
  background-color: #e4e4e4;
  border-bottom: 1px solid #c8c8c8;
}

.menu-gap {
  margin-left: 16px;
}

.toolbar {
  flex: none;
  display: flex;
  align-items: center;
  white-space: nowrap;
  background: linear-gradient(#e4e4e4, #d2d2d2);
  border-bottom: 1px solid #b8b8b8;
}

.tb-one {
  height: 45px;
  padding-left: 3px;
}

.tb-two {
  height: 35px;
  margin-left: -10px;
}

.tb-three {
  height: 34px;
  margin-left: -2px;
  background: linear-gradient(#dcdcdc, #bdbdbd);
}

.tb-select {
  height: 48px;
  background: linear-gradient(#dedede, #e6e6e6);
  border-bottom: 1px solid #f0f0f0;
}

.tb-bottom {
  height: 45px;
  background: linear-gradient(#e6e6e6, #d4d4d4);
}

.blank-strip {
  height: 25px;
  flex: none;
  background-color: #cfcfcf;
}

.slot {
  width: 31px;
  flex: none;
  display: flex;
  justify-content: center;
  align-items: center;
}

.slot-line {
  margin-left: 6px;
}

.slot-tight {
  width: 33px;
}

.ic {
  width: 24px;
  height: 24px;
  display: block;
}

.ic-s {
  width: 20px;
  height: 20px;
  flex: none;
  margin: 0 1.5px;
}

.dim {
  opacity: .8;
}

.ic-chain {
  margin: 0 2px 0 6px;
}

.ic-far {
  margin-left: 6px;
}

.tb-fill {
  flex: 1;
}

.drop {
  width: 10px;
  height: 100%;
  flex: none;
  margin: 0 1.5px 0 2px;
  display: flex;
  justify-content: center;
  align-items: flex-end;
  padding-bottom: 9px;
}

.tb-select .drop {
  margin: 0 1px;
}

.drop::after {
  content: "";
  border: 3.5px solid transparent;
  border-top: 4px solid #111;
  border-bottom: 0;
}

.drop-first {
  margin-left: 7px;
}

.sep {
  width: 2px;
  height: 90%;
  flex: none;
  margin: 0 2px 0 3px;
  background-color: #bcbcbc;
  border-right: 1px solid #f2f2f2;
}

.sep-two {
  margin: 0 2px;
}

.sep-sel {
  margin: 0 4px;
}

.sep-end {
  margin-right: 24px;
}

.grip {
  width: 3px;
  height: 70%;
  flex: none;
  border-left: 3px dotted #a8a8a8;
}

.grip-far {
  margin: 0 3px 0 2px;
}

.toggle {
  width: 30px;
  height: 30px;
  flex: none;
  display: flex;
  justify-content: center;
  align-items: center;
  background-color: #fff;
  border: 1px solid #777;
  border-radius: 3px;
}

.toggle-chain {
  margin-left: 4px;
}

.swatch {
  width: 23px;
  height: 24px;
  flex: none;
  margin: 0 5px 0 4px;
  background-color: #dedede;
  border: 1.5px solid #111;
  border-top-width: 4px;
}

.search {
  width: 255px;
  height: 37px;
  flex: none;
  margin: 0 3px 0 9px;
  display: flex;
  justify-content: space-between;
  align-items: center;
  padding: 0 6px 0 3px;
  font-size: 23px;
  color: #a2a2a2;
  background-color: #e2e2e2;
  border: 1.5px solid #bbb;
  border-right-color: #f4f4f4;
  border-bottom-color: #f4f4f4;
}

.search-ic {
  width: 22px;
  height: 22px;
}

.flag {
  width: 30px;
  height: 28px;
  flex: none;
}

.finish {
  width: 94px;
  flex: none;
  margin-left: 1px;
  font-size: 23px;
  color: #9a9a9a;
}

.boxed {
  width: 17px;
  height: 17px;
  flex: none;
  margin-left: 3px;
  display: flex;
  justify-content: center;
  align-items: center;
  border: 1.5px solid #b01010;
}

.boxed .ic-s {
  width: 14px;
  height: 14px;
  margin: 0;
}

.inner-field {
  width: 582px;
  height: 33px;
  flex: none;
  margin-left: 6px;
  padding-left: 4px;
  font-size: 23px;
  line-height: 28px;
  color: #b8b8b8;
  border: 2px solid #bbb;
  border-right-color: #c8c8c8;
  border-radius: 5px;
}

.status-bar {
  flex: 1;
  display: flex;
  background-color: #e0e0e0;
  overflow: hidden;
}

.status-text {
  width: 358px;
  font-size: 17px;
  font-weight: bold;
  border-right: 1px solid #bbb;
  padding-left: 2px;
}

/* shared controls */
.arrow-btn {
  width: 26px;
  height: 100%;
  flex: none;
  display: flex;
  justify-content: center;
  align-items: center;
  background: linear-gradient(#2b6ec4 0, #4f97e0 35%, #a8d4f6 100%);
  border-top: 1px solid #e6f2ff;
  border-radius: 0 4px 4px 0;
}

.arrow-btn.tri::after {
  content: "";
  border: 7px solid transparent;
  border-top: 7px solid #111;
  border-bottom: 0;
  border-left-width: 6px;
  border-right-width: 6px;
}

.arrow-ic {
  width: 14px;
  height: 14px;
}

.arrow-orange {
  background: linear-gradient(#f9c79a, #f18a3c);
  border-top: 0;
}

.combo,
.spin {
  display: flex;
  align-items: center;
  flex: none;
  background-color: #e2e2e2;
  border: 2px solid #8c8c8c;
  border-right-color: #d8d8d8;
  border-bottom-color: #f2f2f2;
  border-radius: 5px;
  overflow: hidden;
}

.combo-val {
  flex: 1;
  white-space: nowrap;
}

.combo-filter {
  width: 127px;
  height: 33px;
  font-size: 23px;
  border-left: 0;
  border-radius: 0 5px 5px 0;
}

.combo-filter .combo-val {
  margin-left: -11px;
}

.combo-all {
  width: 95px;
  height: 33px;
  margin: 0 4px 0 6px;
  padding-left: 2px;
  font-size: 23px;
}

.combo-wide {
  height: 31px;
  font-size: 18px;
  padding-left: 3px;
}

.combo-field {
  width: 150px;
  height: 30px;
  font-size: 18px;
  padding-left: 2px;
}

.combo-mini {
  width: 52px;
  height: 30px;
  background-color: #e8e8e8;
  padding-left: 3px;
}

.type-ic {
  width: 18px;
  height: 16px;
  margin: 0 1px 0 2px;
  flex: none;
}

.mini-ic {
  width: 20px;
  height: 20px;
  flex: none;
  margin-right: 2px;
}

.combo-mini .mini-ic {
  margin-right: 3px;
}

.pct {
  font-size: 13px;
  fill: #333;
}

.spin {
  width: 150px;
  height: 29px;
  font-size: 18px;
}

.spin-val {
  width: 86px;
  padding-left: 2px;
  white-space: nowrap;
}

.spin-unit {
  width: 36px;
  height: 100%;
  flex: none;
  padding-left: 4px;
  line-height: 26px;
  overflow: hidden;
  background-color: #cfcfcf;
}

.sel {
  padding: 0 4px 0 0;
  color: #fff;
  background-color: #3b99fc;
}

.tool {
  width: 22px;
  height: 25px;
  flex: none;
  display: inline-flex;
  justify-content: center;
  align-items: center;
  background: linear-gradient(#f4f4f4, #cfcfcf);
  border: 1.5px solid #7c7c7c;
  border-right-color: #aaa;
  border-bottom-color: #eee;
  border-radius: 4px;
}

.tool-big {
  width: 30px;
  height: 30px;
}

.tool-green {
  background: linear-gradient(#d9f3c8, #7fd860);
}

.tool-x {
  height: 22px;
  margin-top: 1px;
  background-color: #ddd;
}

.flip-ic {
  width: 18px;
  height: 18px;
}

.cube-ic {
  width: 24px;
  height: 24px;
}

/* viewport */
.viewport {
  height: 699px;
  flex: none;
  position: relative;
  background: linear-gradient(#232426, #5b5c5e);
}

.model {
  display: block;
  width: 100%;
  height: 100%;
}

.axis-z,
.axis-x {
  font-size: 11px;
}

.axis-z {
  fill: #1a2ac0;
}

.axis-x {
  fill: #dedede;
}

.float-panel {
  position: absolute;
  left: 188px;
  top: 11px;
  width: 261px;
  height: 70px;
  display: flex;
  background: linear-gradient(#e2e2e2, #aeaeae);
  border: 1px solid #8c8c8c;
}

.float-grip {
  width: 13px;
  flex: none;
  background:
    radial-gradient(circle, #222 1px, transparent 1.5px) 0 0 / 4.300px 4.300px,
    linear-gradient(90deg, #666, #333);
}

.float-body {
  flex: 1;
  display: flex;
  flex-direction: column;
  justify-content: center;
  gap: 1px;
  padding: 0 4px 0 6px;
}

.float-row {
  height: 30px;
  display: flex;
  align-items: center;
}

.float-label {
  flex: 1;
  font-size: 19px;
}

.float-text {
  flex: 1;
  margin-left: 5px;
  font-size: 18px;
  white-space: nowrap;
}

.spin-float {
  width: 88px;
  height: 29px;
  font-size: 19px;
}

.spin-float .spin-val {
  width: 58px;
}

.edge-tag {
  position: absolute;
  left: 323px;
  top: 471px;
  width: 39px;
  height: 35px;
  display: flex;
  background: linear-gradient(#ececec, #b8b8b8);
  border: 1px solid #8c8c8c;
  font-size: 20px;
  line-height: 33px;
}

.callout {
  position: absolute;
  display: flex;
  align-items: center;
  font-size: 22px;
  font-weight: bold;
  background-color: #ffffcc;
  border: 3px solid #e60000;
  z-index: 3;
}

.callout-zero {
  left: 469px;
  top: 153px;
  width: 63px;
  height: 46px;
  padding-left: 10px;
}

.callout-fifteen {
  left: 384px;
  top: 500px;
  width: 92px;
  height: 53px;
  padding: 0 0 6px 11px;
}

/* draft dialog */
.dialog {
  position: absolute;
  left: 625px;
  top: 55px;
  width: 428px;
  height: 963px;
  display: flex;
  flex-direction: column;
  padding: 0 6px 0 6px;
  background-color: #e9e9e9;
  border-right: 1px solid #333;
}

.dialog-title {
  height: 33px;
  flex: none;
  margin: 0 -6px 4px -6px;
  display: flex;
  align-items: center;
  color: #fff;
  background: linear-gradient(#6c6c6c 0, #4a4a4a 9px, #1a1a1a 10px);
}

.gear {
  width: 14px;
  height: 14px;
  flex: none;
  margin: 6px 8px 0 8px;
}

.dialog-name {
  flex: 1;
  height: 100%;
  padding: 2px 0 0 9px;
  font-size: 22px;
  font-weight: bold;
  border-left: 1px solid #777;
}

.title-cell {
  width: 33px;
  height: 100%;
  flex: none;
  border-left: 1px solid #777;
}

.sec-head {
  height: 28px;
  flex: none;
  display: flex;
  align-items: center;
  justify-content: space-between;
  padding-left: 6px;
  font-size: 18px;
  color: #1a2a70;
  background: linear-gradient(#f6f8f7 0, #f2f4f3 50%, #dfe1e3 52%, #cfd0d2 100%);
  border-bottom: 1px solid #808080;
}

.chev {
  width: 29px;
  height: 100%;
  flex: none;
  position: relative;
  border-left: 1px solid #bcbcbc;
}

.chev::after {
  content: "";
  position: absolute;
  left: 9px;
  top: 11px;
  width: 9px;
  height: 9px;
  border-top: 3px solid #555;
  border-left: 3px solid #555;
  transform: rotate(45deg);
}

.chev-down::after {
  top: 5px;
  transform: rotate(225deg);
}

.sec-body {
  flex: none;
  padding: 7px 9px 0 7px;
  background-color: #d2d2d2;
  border-left: 1px solid #b4b4b4;
}

.sec-type {
  height: 48px;
}

.sec-dir {
  height: 48px;
}

.sec-fixed {
  height: 288px;
}

.sec-points {
  height: 178px;
}

.sec-settings {
  height: 113px;
  padding-top: 8px;
}

.sec-preview {
  height: 48px;
}

.row {
  height: 32px;
  display: flex;
  align-items: center;
  justify-content: space-between;
  font-size: 18px;
}

.row-tall {
  height: 34px;
}

.row-label {
  display: flex;
  align-items: center;
  white-space: nowrap;
}

.row-tools {
  display: flex;
  align-items: center;
  gap: 4px;
}

.row-active {
  background: linear-gradient(90deg, #e3a368 0, #dcbc9c 55%, #cfcccb 78%, #d2d2d2 100%);
  border-radius: 6px;
}

.tick {
  width: 15px;
  height: 15px;
  flex: none;
  margin-right: 5px;
  background-color: #22c040;
  clip-path: polygon(0 55%, 20% 40%, 40% 62%, 85% 5%, 100% 15%, 42% 100%);
}

.split {
  width: 56px;
  height: 30px;
  flex: none;
  display: flex;
  background: linear-gradient(#f4f4f4, #cfcfcf);
  border: 1.5px solid #7c7c7c;
  border-radius: 5px;
  overflow: hidden;
}

.split-ic {
  width: 29px;
  height: 100%;
  flex: none;
  padding: 2px;
}

.split-orange {
  height: 28px;
  background: linear-gradient(#fac99e, #f18a3c);
  border-color: #b58a60;
}

.sublist {
  height: 143px;
  background-color: #bebebe;
  border: 1px solid #8f8f8f;
  border-right-color: #eee;
  border-bottom-color: #eee;
}

.sublist-closed {
  height: 29px;
}

.sublist-head {
  height: 28px;
  display: flex;
  justify-content: space-between;
  align-items: center;
  padding-left: 8px;
  font-size: 18px;
  color: #1a2a70;
}

.sublist .chev {
  border-left: 0;
}

.sublist-body {
  display: flex;
  gap: 4px;
  padding: 7px 0 0 8px;
}

.set-table {
  width: 355px;
  height: 99px;
  flex: none;
  table-layout: fixed;
  border-collapse: collapse;
  background-color: #fff;
  border: 2px solid #555;
  font-size: 18px;
}

.set-table tr {
  height: 28px;
}

.set-table tr.stub {
  height: 14px;
}

.set-table td {
  padding: 0 0 0 3px;
  white-space: nowrap;
  border-right: 1px solid #e2e2e2;
  border-bottom: 1px solid #e2e2e2;
}

.set-table .picked td {
  color: #fff;
  background-color: #3b99fc;
  border-color: #e8f2ff;
}

.set-table .tinted td {
  background-color: #f5f5f5;
}

.set-table td:nth-child(1) {
  width: 60px;
}

.set-table td:nth-child(2) {
  width: 30px;
}

.set-table td:nth-child(3) {
  width: 77px;
}

.checkbox {
  width: 15px;
  height: 16px;
  flex: none;
  margin: 0 11px 0 1px;
  background: linear-gradient(135deg, #5a8fd8, #cfe6fb);
  border: 1.5px solid #334e80;
  border-radius: 2px;
  position: relative;
}

.checkbox::after {
  content: "";
  position: absolute;
  left: 3px;
  top: 0;
  width: 6px;
  height: 10px;
  border: solid #fff;
  border-width: 0 2px 2px 0;
  transform: rotate(40deg);
}

.num {
  width: 89px;
  height: 28px;
  flex: none;
  padding-right: 3px;
  text-align: right;
  line-height: 25px;
  font-size: 18px;
  letter-spacing: .8px;
  background-color: #d8d8d8;
  border: 1.5px solid #666;
  border-right-color: #eee;
  border-bottom-color: #f2f2f2;
  border-radius: 4px;
}

.show-btn {
  width: 107px;
  height: 32px;
  flex: none;
  padding-left: 4px;
  text-align: left;
  font-size: 18px;
  background: linear-gradient(#e8e8e8, #cfcfcf);
  border: 1.5px solid #999;
  border-radius: 4px;
}

.dialog-foot {
  flex: 1;
  display: flex;
  justify-content: flex-end;
  align-items: flex-start;
  gap: 8px;
  padding: 9px 9px 0 0;
  border-top: 1px solid #b4b4b4;
}

.foot-btn {
  width: 63px;
  height: 40px;
  flex: none;
  font-size: 19px;
  white-space: nowrap;
  background: linear-gradient(#e6e6e6 0, #d8d8d8 40%, #ececec 100%);
  border: 1.5px solid #8c8c8c;
  border-radius: 4px 4px 0 0;
}

/* things lying over the dialog */
.marks {
  position: absolute;
  left: 0;
  top: 0;
  width: 1135px;
  height: 1018px;
  pointer-events: none;
}

.speed-badge {
  position: absolute;
  left: 938px;
  top: 35px;
  width: 156px;
  height: 38px;
  display: flex;
  border: 1px solid #6cb4ec;
  border-radius: 4px;
  overflow: hidden;
}

.speed-logo {
  width: 45px;
  flex: none;
  display: flex;
  justify-content: center;
  align-items: center;
  background-color: #1a96e8;
}

.speed-ic {
  width: 32px;
  height: 26px;
}

.speed-val {
  flex: 1;
  display: flex;
  align-items: center;
  gap: 3px;
  padding-left: 5px;
  font-size: 21px;
  color: #4d6f8d;
  background: linear-gradient(90deg, #5ab8f0 0, #5ab8f0 26%, #a5dafb 27%, #a8dbfa 100%);
}

.speed-arrow {
  width: 13px;
  height: 16px;
  flex: none;
}

.watermark {
  position: absolute;
  left: 833px;
  top: 917px;
  width: 302px;
  height: 101px;
  display: flex;
  overflow: hidden;
  opacity: .88;
}

.wm-logo {
  width: 86px;
  height: 100px;
  flex: none;
}

.wm-text {
  display: flex;
  flex-direction: column;
  margin-left: 8px;
  padding-top: 13px;
  white-space: nowrap;
}

.wm-name {
  height: 47px;
  font-size: 47px;
  line-height: 47px;
  font-weight: bold;
  color: #58b4e0;
  text-shadow: 2px 0 #fff, -2px 0 #fff, 0 2px #fff, 0 -2px #fff, 2px 2px #fff, -2px -2px #fff;
  opacity: .85;
}

.wm-url {
  font-size: 20px;
  font-weight: bold;
  letter-spacing: .6px;
  color: #5ab5e0;
  text-shadow: 1px 0 #fff, -1px 0 #fff, 0 1px #fff, 0 -1px #fff;
}
```
